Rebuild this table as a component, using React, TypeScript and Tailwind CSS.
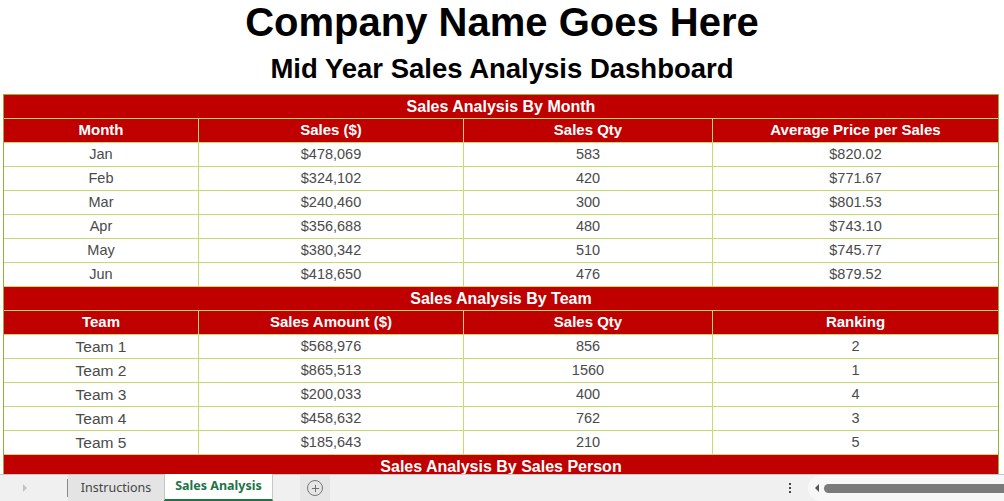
import { Plus } from "lucide-react"

const months = [
  ["Jan", "$478,069", "583", "$820.02"],
  ["Feb", "$324,102", "420", "$771.67"],
  ["Mar", "$240,460", "300", "$801.53"],
  ["Apr", "$356,688", "480", "$743.10"],
  ["May", "$380,342", "510", "$745.77"],
  ["Jun", "$418,650", "476", "$879.52"],
]

const teams = [
  ["Team 1", "$568,976", "856", "2"],
  ["Team 2", "$865,513", "1560", "1"],
  ["Team 3", "$200,033", "400", "4"],
  ["Team 4", "$458,632", "762", "3"],
  ["Team 5", "$185,643", "210", "5"],
]

const cols = "grid grid-cols-[194px_265px_249px_1fr]"

function TitleRow({ title }: { title: string }) {
  return (
    <div className="flex h-6 items-center justify-center border-b border-[#c9d96a] bg-[#c00000] text-[16px] font-bold text-white">
      {title}
    </div>
  )
}

function HeaderRow({ cells }: { cells: string[] }) {
  return (
    <div className={`${cols} h-6 border-b border-[#c9d96a] bg-[#c00000] text-[15px] font-bold text-white`}>
      {cells.map((c, i) => (
        <div key={i} className={`flex items-center justify-center ${i > 0 ? "border-l border-[#ddd36a]" : ""}`}>
          {c}
        </div>
      ))}
    </div>
  )
}

function DataRow({ cells, wide }: { cells: string[]; wide?: boolean }) {
  return (
    <div className={`${cols} h-6 border-b border-[#c9d96a] bg-white text-[14.5px] text-[#4a4a4a]`}>
      {cells.map((c, i) => (
        <div
          key={i}
          className={`flex items-center justify-center ${i > 0 ? "border-l border-[#c9d96a]" : ""} ${wide && i === 0 ? "text-[15.5px]" : ""}`}
        >
          {c}
        </div>
      ))}
    </div>
  )
}

export default function App() {
  return (
    <div className="flex h-[501px] w-[1004px] flex-col overflow-hidden bg-white font-['Liberation_Sans',Arial,sans-serif]">
      {/* Sheet */}
      <div className="flex-1 overflow-hidden">
        <div className="flex h-[55px] items-start justify-center">
          <h1 className="text-[40px] font-bold leading-[45px] text-black">Company Name Goes Here</h1>
        </div>
        <div className="flex h-[39px] items-start justify-center">
          <h2 className="text-[27.5px] font-bold leading-none text-black">Mid Year Sales Analysis Dashboard</h2>
        </div>
        <div className="ml-[3px] w-[996px] border-x border-t border-[#8db33a]">
          <TitleRow title="Sales Analysis By Month" />
          <HeaderRow cells={["Month", "Sales ($)", "Sales Qty", "Average Price per Sales"]} />
          {months.map((r) => (
            <DataRow key={r[0]} cells={r} />
          ))}
          <TitleRow title="Sales Analysis By Team" />
          <HeaderRow cells={["Team", "Sales Amount ($)", "Sales Qty", "Ranking"]} />
          {teams.map((r) => (
            <DataRow key={r[0]} cells={r} wide />
          ))}
          <TitleRow title="Sales Analysis By Sales Person" />
          <div className="h-6 bg-[#c00000]" />
        </div>
      </div>

      {/* Sheet tabs */}
      <div className="flex h-[27px] shrink-0 items-stretch border-t border-[#c6c6c6] bg-[#f0f0f0] text-[12.5px] font-['Noto_Sans',sans-serif]">
        <div className="flex w-[67px] items-center pl-[22px]">
          <svg width="6" height="8" viewBox="0 0 6 8">
            <path d="M1 0 L5 4 L1 8 Z" fill="#c2c2c2" />
          </svg>
        </div>
        <div className="my-[4px] w-px bg-[#8a8a8a]" />
        <div className="flex w-[96px] items-center justify-center bg-[#e4e4e4] text-[#444]">Instructions</div>
        <div className="-mt-px flex w-[109px] items-center justify-center border-x border-[#c6c6c6] border-b-2 border-b-[#217346] bg-white font-bold text-[#217346]">
          Sales Analysis
        </div>
        <div className="ml-[27px] flex w-[30px] items-center justify-center bg-[#e6e6e6]">
          <div className="flex h-4 w-4 items-center justify-center rounded-full border border-[#777]">
            <Plus size={11} strokeWidth={2} color="#666" />
          </div>
        </div>
        <div className="flex-1" />
        <div className="flex w-[20px] flex-col items-center justify-center gap-[2px]">
          <div className="h-[2px] w-[2px] bg-[#444]" />
          <div className="h-[2px] w-[2px] bg-[#444]" />
          <div className="h-[2px] w-[2px] bg-[#444]" />
        </div>
        <div className="ml-[8px] flex w-[196px] items-center gap-[4px] rounded-l-full bg-[#f7f7f7] pl-[6px]">
          <svg width="6" height="8" viewBox="0 0 6 8">
            <path d="M5 0 L1 4 L5 8 Z" fill="#555" />
          </svg>
          <div className="h-[9px] flex-1 rounded-l-full bg-[#7a7a7a]" />
        </div>
      </div>
    </div>
  )
}
